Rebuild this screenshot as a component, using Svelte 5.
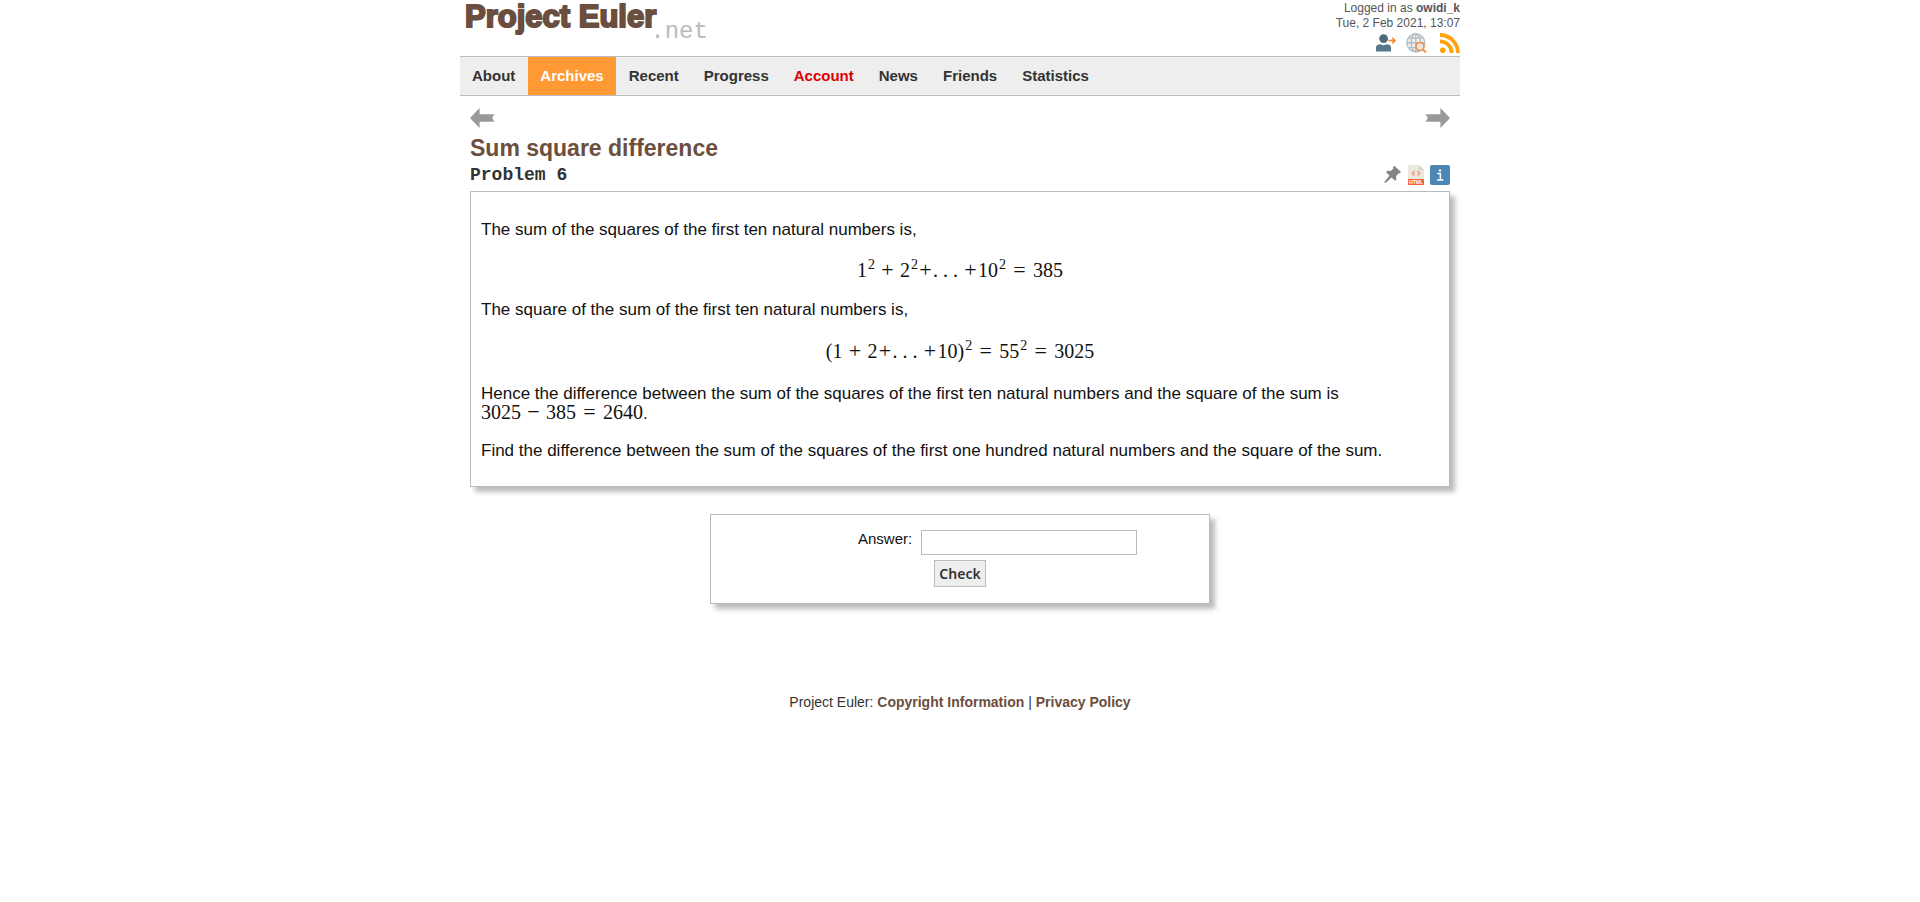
<script>
  const links = ['About', 'Archives', 'Recent', 'Progress', 'Account', 'News', 'Friends', 'Statistics'];
  let answer = $state('');
</script>

{#snippet arrow()}
  <svg width="25" height="20" viewBox="0 0 25 20" aria-hidden="true">
    <path d="M0 10 L9.6 0 V6.2 H24.4 L22.2 10 L24.4 13.8 H9.6 V20 Z" fill="#999" />
  </svg>
{/snippet}

<div class="page">
  <header>
    <a class="logo" href="#home"><span class="name">Project Euler</span><span class="suffix">.net</span></a>
    <div class="session">
      <div>Logged in as <strong>owidi_k</strong></div>
      <div>Tue, 2 Feb 2021, 13:07</div>
      <div class="tools">
        <a href="#signout" aria-label="Sign out">
          <svg width="20" height="20" viewBox="0 0 20 20">
            <circle cx="7.6" cy="5.6" r="4.4" fill="#4f6b7c" />
            <path d="M0 18.5 V14.5 Q0 11.8 3 11.4 L5 11.2 Q7.5 13.4 10 11.2 L12 11.4 Q15 11.8 15 14.5 V18.5 Z" fill="#56788a" />
            <path d="M12.4 7.6 H18.8 M16.2 4.8 L19 7.6 L16.2 10.4" fill="none" stroke="#f58a2e" stroke-width="1.5" />
          </svg>
        </a>
        <a class="globe" href="#search" aria-label="Search">
          <svg width="21" height="20" viewBox="0 0 21 20">
            <circle cx="9.8" cy="9.8" r="9" fill="#eceff0" />
            <g fill="none" stroke="#b4bec4" stroke-width="1.4">
              <circle cx="9.8" cy="9.8" r="9" />
              <ellipse cx="9.8" cy="9.8" rx="4.6" ry="9" />
              <path d="M9.8 .8 V18.8 M.8 9.8 H18.8 M2.5 5 H17 M2.5 14.6 H17" />
            </g>
            <circle cx="14" cy="13.5" r="4" fill="#e6e4e0" stroke="#f09348" stroke-width="1.7" />
            <path d="M16.8 16.5 L20 19.5" stroke="#f09348" stroke-width="2" />
          </svg>
        </a>
        <a href="#rss" aria-label="RSS feed">
          <svg width="20" height="20" viewBox="0 0 20 20">
            <circle cx="2.8" cy="17.2" r="2.8" fill="#ffa30c" />
            <path d="M0 8.3 A11.7 11.7 0 0 1 11.7 20 M0 2 A18 18 0 0 1 18 20" fill="none" stroke="#ffa30c" stroke-width="3.8" />
          </svg>
        </a>
      </div>
    </div>
  </header>

  <nav>
    {#each links as link}
      <a href="#{link.toLowerCase()}" class:current={link === 'Archives'} class:alert={link === 'Account'}>{link}</a>
    {/each}
  </nav>

  <main>
    <div class="pager">
      <a href="#previous" aria-label="Previous problem">{@render arrow()}</a>
      <a class="next" href="#next" aria-label="Next problem">{@render arrow()}</a>
    </div>
    <h1>Sum square difference</h1>
    <div class="heading">
      <h2>Problem 6</h2>
      <div class="actions">
        <a href="#pin" aria-label="Pin problem">
          <svg width="18" height="20" viewBox="0 0 18 20">
            <path d="M10.4 .8 L17 7 L15.4 8.6 L14.4 8.4 L12 11.4 L12.4 14.4 L11 15.8 L7.6 12.6 L1.8 17.8 L.5 18 L.8 16.6 L5.5 10.6 L2 7.2 L3.4 5.8 L6.7 6 L9.4 3.4 L9 2.2 Z" fill="#858585" />
          </svg>
        </a>
        <a href="#html" aria-label="HTML version">
          <svg width="16" height="20" viewBox="0 0 16 20">
            <path d="M0 1 Q0 0 1 0 H11 L16 5 V14 H0 Z" fill="#e9e8dc" />
            <path d="M11 0 L16 5 H11 Z" fill="#d5d4c5" />
            <path d="M6.5 6 L4.3 8.2 L6.5 10.4 M9.5 6 L11.7 8.2 L9.5 10.4" fill="none" stroke="#f29371" stroke-width="1.4" />
            <path d="M0 14 H16 V19 Q16 20 15 20 H1 Q0 20 0 19 Z" fill="#f26335" />
            <text x="8" y="19" text-anchor="middle" font-family="Liberation Sans" font-size="5" font-weight="700" fill="#fff">HTML</text>
          </svg>
        </a>
        <a href="#info" aria-label="Problem information">
          <svg width="20" height="20" viewBox="0 0 20 20">
            <rect width="20" height="20" rx="2" fill="#4b87b2" />
            <path d="M7.2 8.5 H10.4 V15 M7 15 H13.4" fill="none" stroke="#fff" stroke-width="1.5" />
            <circle cx="10" cy="5.4" r="1.2" fill="#fff" />
          </svg>
        </a>
      </div>
    </div>

    <section class="panel problem">
      <p>The sum of the squares of the first ten natural numbers is,</p>
      <div class="formula">1<sup>2</sup><i class="bin">+</i>2<sup>2</sup><i>+</i>. . . <i>+</i>10<sup>2</sup><i class="rel">=</i>385</div>
      <p>The square of the sum of the first ten natural numbers is,</p>
      <div class="formula tall">(1<i class="bin">+</i>2<i>+</i>. . . <i>+</i>10)<sup>2</sup><i class="rel">=</i>55<sup>2</sup><i class="rel">=</i>3025</div>
      <p>
        Hence the difference between the sum of the squares of the first ten natural numbers and the square of the sum is
        <span class="math">3025<i class="bin">−</i>385<i class="rel">=</i>2640</span>.
      </p>
      <p>Find the difference between the sum of the squares of the first one hundred natural numbers and the square of the sum.</p>
    </section>

    <form class="panel answer" onsubmit={(e) => e.preventDefault()}>
      <label for="guess">Answer:</label>
      <input id="guess" type="text" bind:value={answer} />
      <button type="submit">Check</button>
    </form>
  </main>

  <footer>Project Euler: <a href="#copyright">Copyright Information</a> | <a href="#privacy">Privacy Policy</a></footer>
</div>

<style>
  :global(body) {
    margin: 0;
    background: #fff;
    color: #111;
    font-family: "Liberation Sans", Arial, sans-serif;
  }
  a {
    text-decoration: none;
    color: inherit;
  }
  svg {
    display: block;
  }
  .page {
    max-width: 1000px;
    margin: 0 auto;
  }
  header {
    display: flex;
    justify-content: space-between;
    min-height: 56px;
  }
  .logo {
    display: flex;
    align-items: flex-start;
    padding-left: 5px;
  }
  .name {
    font-size: 31px;
    line-height: 34px;
    font-weight: 700;
    color: #6b4e3d;
    -webkit-text-stroke: 2px #6b4e3d;
  }
  .suffix {
    margin: 19px 0 0 -6px;
    font-family: "Liberation Mono", "Courier New", monospace;
    font-size: 24px;
    line-height: 26px;
    color: #bbb;
  }
  .session {
    padding-top: 1px;
    font-size: 12px;
    line-height: 15px;
    text-align: right;
    color: #555;
  }
  .tools {
    display: flex;
    justify-content: flex-end;
    gap: 10px;
    padding-top: 2px;
  }
  .globe {
    padding-right: 3px;
  }
  nav {
    display: flex;
    gap: 1px;
    background: #eee;
    border: solid #bbb;
    border-width: 1px 0;
    font-size: 15px;
    font-weight: 700;
    line-height: 38px;
    color: #333;
  }
  nav a {
    padding: 0 12px;
  }
  nav .current {
    background: #f93;
    color: #fff;
  }
  nav .alert {
    color: #d00;
  }
  main {
    padding: 12px 10px 0;
  }
  .pager,
  .heading {
    display: flex;
    justify-content: space-between;
  }
  .next svg {
    transform: scaleX(-1);
  }
  h1 {
    margin: 6px 0 3px;
    font-size: 23px;
    line-height: 28px;
    color: #6b4e3d;
  }
  .heading {
    margin-bottom: 6px;
  }
  h2 {
    margin: 0;
    font-family: "Liberation Mono", "Courier New", monospace;
    font-size: 18px;
    line-height: 20px;
    color: #333;
  }
  .actions {
    display: flex;
    gap: 6px;
  }
  .panel {
    border: 1px solid #bbb;
    background: #fff;
    box-shadow: 5px 5px 5px #bbb;
  }
  .problem {
    display: flow-root;
    padding: 0 10px;
    font-size: 17px;
    line-height: 20px;
  }
  .problem p {
    margin: 17px 0;
  }
  .problem p:first-child {
    margin-top: 28px;
  }
  .problem p:last-child {
    margin-bottom: 25px;
  }
  .formula,
  .math {
    font-family: "Liberation Serif", "Times New Roman", serif;
    font-size: 20px;
    white-space: nowrap;
  }
  .formula {
    line-height: 26px;
    text-align: center;
  }
  .tall {
    line-height: 30px;
    margin-top: -1px;
    padding-bottom: 1px;
  }
  .math {
    line-height: 0;
  }
  .problem i {
    display: inline-block;
    width: 15px;
    font-size: 22px;
    font-style: normal;
    line-height: 0;
    text-align: center;
  }
  .problem .bin {
    margin: 0 5px;
  }
  .problem .rel {
    margin: 0 6px;
  }
  sup {
    margin-left: 1px;
    font-size: 14px;
    line-height: 0;
  }
  .answer {
    display: grid;
    grid-template-columns: 40% 1fr;
    gap: 5px 9px;
    max-width: 478px;
    margin: 27px auto 0;
    padding: 15px 10px 16px;
    font-size: 15px;
    line-height: 18px;
  }
  label {
    text-align: right;
  }
  input {
    box-sizing: border-box;
    width: 216px;
    height: 25px;
    padding: 2px 4px;
    border: 1px solid #bbb;
    background: #fff;
    font: inherit;
  }
  button {
    grid-column: 1 / -1;
    justify-self: center;
    padding: 3px 4px;
    border: 1px solid #bbb;
    background: #eee;
    color: #333;
    font: 600 14px/19px "Noto Sans", "Open Sans", sans-serif;
  }
  footer {
    margin-top: 89px;
    text-align: center;
    font-size: 14px;
    line-height: 18px;
    color: #333;
  }
  footer a {
    font-weight: 700;
    color: #6b4e3d;
  }
</style>
